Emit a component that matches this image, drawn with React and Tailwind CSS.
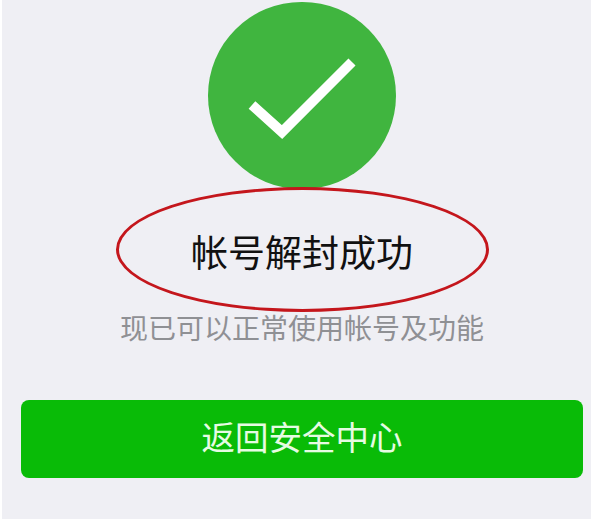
const cjk = "font-['Liberation_Sans','Noto_Sans_CJK_SC',sans-serif]";

const App = () => {
  return (
    <div className={`h-[519px] w-[591px] overflow-hidden bg-white pl-[2px] ${cjk}`}>
      <div className="flex h-full flex-col items-center bg-[#efeff4] pl-[19px] pr-2 pt-[2px]">
        <div className="flex h-[187px] w-[188px] shrink-0 items-center justify-center rounded-full bg-[#40b53f]">
          <svg width="188" height="187" viewBox="0 0 188 187" fill="none">
            <path d="M44 103 L74 130 L144 60" stroke="#fff" strokeWidth="10" />
          </svg>
        </div>
        <div className="relative mt-[-2px] flex h-[125px] w-[373px] shrink-0 items-center justify-center pt-[9px]">
          <h1 className="text-[37px] leading-none text-[#111]">帐号解封成功</h1>
          <div className="absolute inset-0 rounded-[50%] border-[3px] border-[#c4161c]" />
        </div>
        <p className="text-[28px] leading-[36px] text-[#8f9094]">现已可以正常使用帐号及功能</p>
        <button className="mt-[52px] h-[78px] w-full shrink-0 rounded-lg bg-[#09bb07] text-[33.5px] text-[#e6fbe3]">
          返回安全中心
        </button>
      </div>
    </div>
  );
};

export default App;
